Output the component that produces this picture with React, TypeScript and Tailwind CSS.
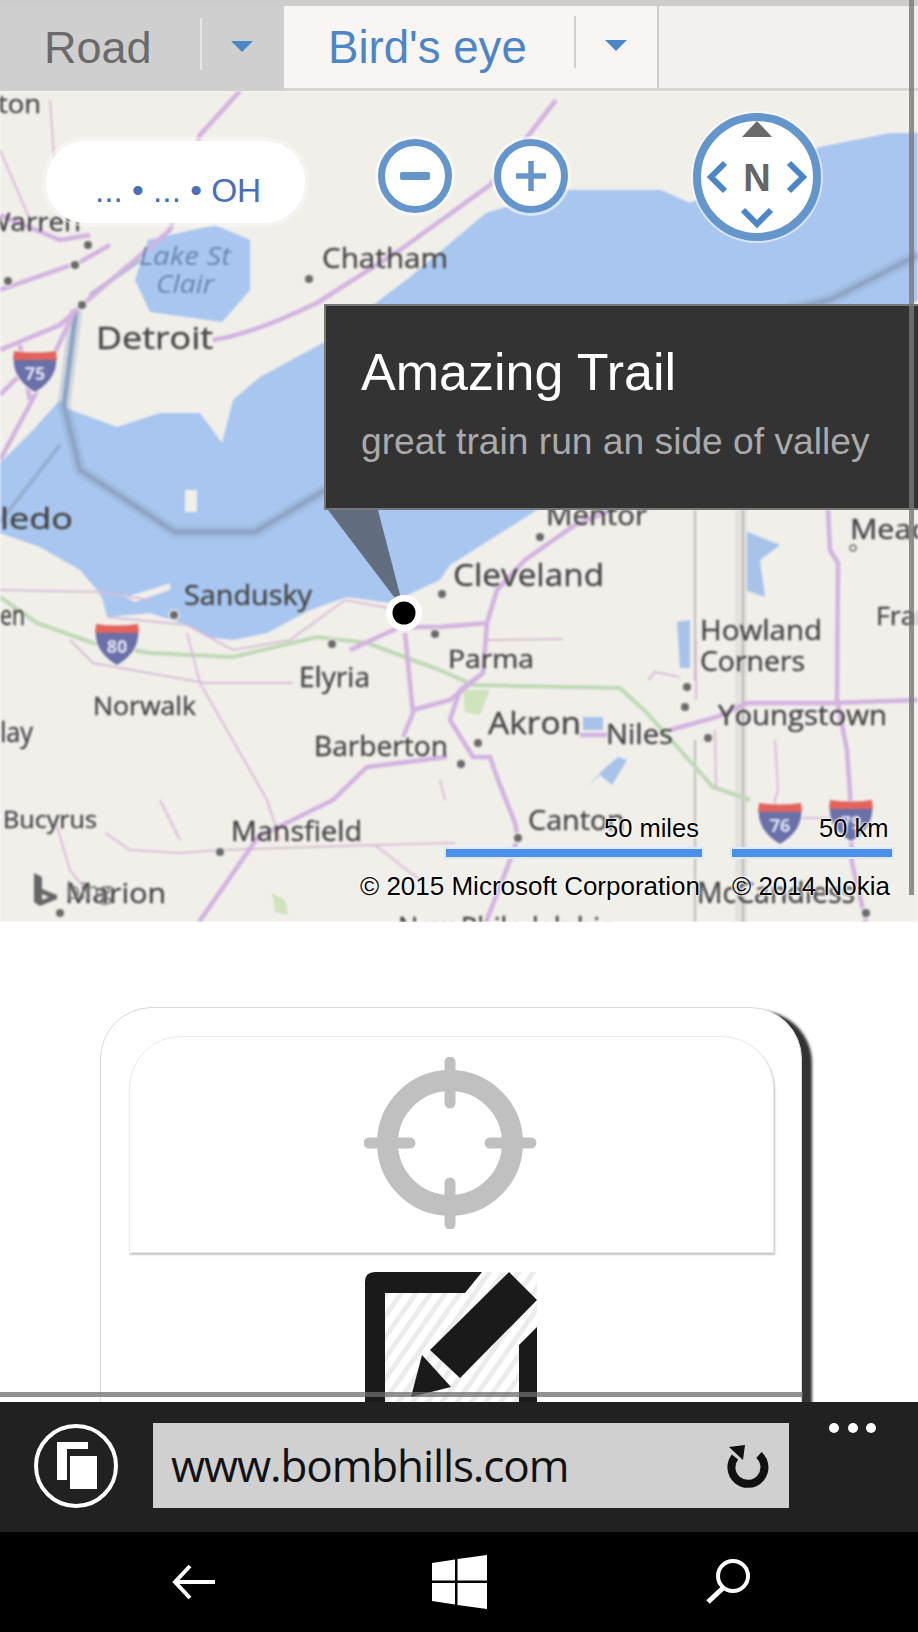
const seg = '"Open Sans","Noto Sans",sans-serif';
const labels: [string, number, number, number, number, string?][] = [
  ['ton', -2, 113, 26, 43],
  ['Warren', -15, 231, 26, 96],
  ['Chatham', 322, 268, 28, 126],
  ['Detroit', 96, 349, 31, 117],
  ['ledo', 0, 529, 30, 73],
  ['Sandusky', 184, 605, 27, 128],
  ['en', 0, 625, 27, 25],
  ['Elyria', 299, 687, 27, 71],
  ['Norwalk', 93, 715, 25, 103],
  ['lay', 0, 742, 27, 33],
  ['Barberton', 314, 756, 27, 134],
  ['Bucyrus', 3, 828, 24, 94],
  ['Mansfield', 231, 841, 28, 131],
  ['Marion', 65, 903, 27, 101],
  ['Mentor', 546, 525, 27, 101],
  ['Cleveland', 453, 586, 31, 151],
  ['Parma', 448, 668, 26, 86],
  ['Akron', 488, 734, 31, 93],
  ['Niles', 606, 744, 28, 67],
  ['Howland', 700, 640, 28, 122],
  ['Corners', 700, 671, 28, 105],
  ['Mead', 850, 539, 27, 80],
  ['Franklin', 876, 625, 26, 100],
  ['Youngstown', 718, 725, 28, 169],
  ['Canton', 528, 830, 28, 97],
  ['McCandless', 697, 903, 29, 158],
  ['New Philadelphia', 398, 937, 28, 217],
];
const dots: [number, number][] = [
  [82, 305], [88, 245], [75, 265], [8, 281], [309, 279], [174, 615], [332, 644], [540, 537], [442, 594],
  [435, 634], [478, 743], [461, 764], [687, 687], [685, 707], [708, 738], [518, 838], [220, 852], [60, 913], [866, 913],
];
const purple = [
  'M240 91 L200 135 L170 230 L82 305',
  'M213 340 Q250 335 317 303 L400 250 L490 185 L556 100',
  'M0 460 L35 395 L75 310',
  'M0 395 L20 375 M20 345 L30 400',
  'M0 215 L60 240 L90 235 M0 290 L80 262 L110 245 M0 350 L60 325 L82 305',
  'M350 650 L400 627 L440 627 L487 623 L497 590 L525 560 L575 525 L625 505',
  'M487 623 L483 673 L460 690 L450 720 L473 757 L490 757 L498 780 L515 823 L518 838 L509 863 L486 922',
  'M405 633 L413 713 L403 737 M413 710 L450 700 L483 673',
  'M447 757 L367 767 L333 800 L258 837 L199 922',
  'M580 735 L607 735 M670 730 L717 717 L747 703 L833 703 L918 700',
  'M828 510 L830 550 L838 563 L837 700 L847 750 L850 793 L852 863 L866 922',
];
const pink = [
  'M0 590 L100 592 L150 600 M107 617 L187 625 L233 650 L290 640 L345 600 L400 610',
  'M187 633 L200 683 L267 800 L280 840 M293 683 L205 683 L93 663 L70 640',
  'M105 833 L130 850 L180 853 L220 850 L375 845 L455 843 M375 845 L420 880',
  'M55 820 L70 870 L90 895 M160 800 L180 840',
  'M648 680 L655 672 L680 677 M696 640 L696 700 M775 740 L778 790 L775 800 L775 818 L850 818',
  'M487 640 L563 639 M0 150 L30 220 M50 100 L55 170',
  'M715 730 L716 790 M440 780 L445 800',
];
const water = 'M918 133 L890 133 L820 147 L690 203 L661 190 L562 190 L486 213 L410 277 L323 343 L260 377 L233 400 L222 443 L200 413 L160 413 L117 427 L63 407 L60 400 L33 430 L0 463 L0 533 L40 547 L80 570 L97 590 L103 600 L107 617 L150 613 L187 625 L207 637 L233 640 L267 633 L310 610 L347 597 L390 603 L440 580 L450 565 L537 510 L918 300 Z';

function MapArt() {
  return (
    <svg viewBox="0 91 918 831" width="918" height="831" className="block blur-[0.8px]">
      <rect x="0" y="91" width="918" height="831" fill="#f1efea" />
      <path d={water} fill="#a8c6ef" />
      <path d="M148 240 L215 225 L250 240 L250 290 L222 322 L150 312 L135 280 Z" fill="#a8c6ef" />
      <path d="M185 490 L197 490 L197 512 L185 512 Z M125 597 Q150 590 170 583 L170 590 L135 602 Z" fill="#f1efea" />
      <path d="M743 530 L780 545 L760 560 L765 597 L745 590 L740 560 Z M677 622 L690 620 L690 668 L680 668 Z M583 717 L603 717 L603 730 L583 730 Z M627 760 L612 785 L600 775 L587 787 L605 768 L618 757 Z" fill="#a8c3ea" />
      <path d="M463 690 L490 690 L480 715 L465 712 Z M272 893 L285 900 L288 915 L275 912 Z" fill="#cfe3bd" />
      <rect x="735" y="510" width="12" height="412" fill="#e4e2de" />
      <path d="M695 510 L695 680 M743 510 L743 922 M695 740 L695 922" stroke="#aaaaaa" strokeWidth="1.5" fill="none" />
      <path d="M76 310 L64 405 L80 470 L175 532 L255 532 L325 490 M560 360 L700 330 L830 300 L918 255" stroke="#8ea5c6" strokeWidth="13" strokeOpacity="0.35" fill="none" />
      <path d="M76 310 L64 405 L80 470 L175 532 L255 532 L325 490 M560 360 L700 330 L830 300 L918 255" stroke="#8ea5c6" strokeWidth="5" fill="none" />
      <path d="M0 522 L60 445 M140 260 L90 295" stroke="#8ea5c6" strokeWidth="4" fill="none" opacity="0.7" />
      <path d="M0 597 L37 623 L93 643 L150 653 L233 657 L317 637 L367 643 L440 670 L473 685 L620 688 L647 713 L680 750 L713 787 L750 800" stroke="#bfd9b5" strokeWidth="4" fill="none" />
      {pink.map((d) => (
        <path key={d} d={d} stroke="#d9bfd8" strokeWidth="2" fill="none" />
      ))}
      {purple.map((d) => (
        <path key={d} d={d} stroke="#d3b3e0" strokeWidth="4.5" fill="none" />
      ))}
      {dots.map(([x, y]) => (
        <g key={x + '-' + y}>
          <circle cx={x} cy={y} r="6" fill="#f1efea" opacity="0.8" />
          <circle cx={x} cy={y} r="4" fill="#6a6a6a" />
        </g>
      ))}
      <circle cx="853" cy="548" r="3" fill="none" stroke="#777" strokeWidth="1.5" />
      {labels.map(([t, x, y, s, w]) => (
        <text key={t} x={x} y={y} fontSize={s} textLength={w} lengthAdjust="spacingAndGlyphs" fontFamily={seg} fill="#444444" stroke="#444444" strokeWidth="0.35">
          {t}
        </text>
      ))}
      <text x="139" y="265" fontSize="25" fontStyle="italic" textLength="92" lengthAdjust="spacingAndGlyphs" fontFamily={seg} fill="#6a85b5">Lake St</text>
      <text x="156" y="293" fontSize="25" fontStyle="italic" textLength="58" lengthAdjust="spacingAndGlyphs" fontFamily={seg} fill="#6a85b5">Clair</text>
      {([[12, 349, '75'], [94, 622, '80'], [757, 801, '76'], [828, 798, '79']] as [number, number, string][]).map(([x, y, n]) => (
        <g key={n} transform={`translate(${x} ${y})`}>
          <path d="M2 2 Q22 5 44 2 Q50 28 23 44 Q-4 28 2 2 Z" fill="#6a70a8" stroke="#f1efea" strokeWidth="1.5" />
          <path d="M2 2 Q22 5 44 2 L45 11 L1 11 Z" fill="#e2635d" />
          <text x="23" y="31" fontSize="18" fontWeight="700" textAnchor="middle" fontFamily={seg} fill="#dfe3f3">{n}</text>
        </g>
      ))}
      <path d="M34 873 L42 877 L42 889 L57 895 L57 899 L40 906 L34 902 Z" fill="#666666" />
      <path d="M42 894 L49 897 L42 900 Z" fill="#f1efea" />
      <text x="66" y="899" fontSize="23" textLength="46" fontFamily={seg} fill="#777777">bing</text>
    </svg>
  );
}

function Caret() {
  return <span className="block w-0 h-0 border-l-[11px] border-r-[11px] border-t-[11px] border-l-transparent border-r-transparent border-t-[#4d86c6]" />;
}

function Round({ children }: { children: React.ReactNode }) {
  return (
    <svg width="84" height="84" viewBox="-42 -42 84 84">
      <circle r="40" fill="#fff" opacity="0.55" />
      <circle r="33.5" fill="#fff" stroke="#6496cc" strokeWidth="7" />
      {children}
    </svg>
  );
}

const halo = '[text-shadow:0_0_2px_#fff,0_0_2px_#fff,0_0_3px_#fff]';

export default function App() {
  return (
    <div className="relative w-[918px] h-[1632px] overflow-hidden flex flex-col bg-white font-['Liberation_Sans',Arial,sans-serif]">
      <div className="h-[6px] bg-[#cdcdcd] shrink-0" />
      {/* tabs */}
      <div className="h-[85px] shrink-0 flex bg-[#f3f1ee] border-b-[3px] border-[#d8d6d2]">
        <div className="w-[284px] -mb-[3px] bg-[#cfcfcf] flex items-center">
          <span className="ml-[44px] w-[156px] text-[45px] leading-none text-[#6a6a6a] pb-[3px]">Road</span>
          <span className="w-[2px] h-[52px] bg-[#e6e6e6] -mt-[10px]" />
          <span className="ml-[29px] -mt-[4px]"><Caret /></span>
        </div>
        <div className="w-[375px] bg-[#f8f5f2] border-r-[2px] border-[#cfcdc9] flex items-center">
          <span className="ml-[44px] w-[246px] text-[45.6px] leading-none text-[#4d86c6] pt-[1px]">Bird's eye</span>
          <span className="w-[2px] h-[52px] bg-[#cfcfcf] -mt-[10px]" />
          <span className="ml-[29px] -mt-[4px]"><Caret /></span>
        </div>
      </div>
      {/* map */}
      <div className="relative h-[831px] shrink-0 overflow-hidden">
        <MapArt />
        <div className="absolute left-[46px] top-[50px] w-[259px] h-[82px] rounded-[40px] bg-white shadow-[0_0_0_4px_rgba(255,255,255,0.35)] pl-[49px] pt-[31px] text-[33.4px] leading-[38px] text-[#4a6fb5] whitespace-nowrap">
          ... • ... • OH
        </div>
        <div className="absolute left-[373px] top-[43px]">
          <Round>
            <rect x="-15" y="-4" width="30" height="8" rx="2" fill="#6496cc" />
          </Round>
        </div>
        <div className="absolute left-[489px] top-[43px]">
          <Round>
            <path d="M-15 0 H15 M0 -15 V15" stroke="#6496cc" strokeWidth="5.5" />
          </Round>
        </div>
        <div className="absolute left-[690px] top-[19px]">
          <svg width="134" height="134" viewBox="-67 -67 134 134">
            <circle r="66" fill="#fff" opacity="0.55" />
            <circle r="60" fill="#fff" stroke="#6496cc" strokeWidth="8" />
            <path d="M-15 -40 L0 -56 L15 -40 Z" fill="#6a6a6a" />
            <path d="M-32 -14 L-46 0 L-32 14 M32 -14 L46 0 L32 14 M-14 33 L0 47 L14 33" stroke="#4d86c6" strokeWidth="6" fill="none" />
            <text x="0" y="14" textAnchor="middle" fontSize="38" fontWeight="700" fontFamily="'Liberation Sans',sans-serif" fill="#666666">N</text>
          </svg>
        </div>
        {/* pointer + pin */}
        <svg className="absolute left-[325px] top-[419px]" width="100" height="125" viewBox="325 510 100 125">
          <path d="M328 510 L378 510 L404 610 Z" fill="#333" opacity="0.6" />
          <circle cx="404" cy="613" r="18" fill="#fff" />
          <circle cx="404" cy="613" r="11.5" fill="#000" />
        </svg>
        {/* infobox */}
        <div className="absolute left-[324px] top-[213px] w-[594px] h-[206px] bg-[#333333] border-2 border-r-0 border-[#777777] pl-[35px] pt-[36px]">
          <div className="text-[52px] leading-[60px] text-white">Amazing Trail</div>
          <div className="mt-[18px] text-[37.2px] leading-[42px] text-[#aaaaaa] whitespace-nowrap">great train run an side of valley</div>
        </div>
        {/* scale */}
        <div className={`absolute left-[604px] top-[722px] text-[25.5px] leading-[30px] text-black whitespace-nowrap ${halo}`}>50 miles</div>
        <div className={`absolute left-[819px] top-[722px] text-[25.5px] leading-[30px] text-black whitespace-nowrap ${halo}`}>50 km</div>
        <div className="absolute left-[444px] top-[756px] w-[260px] h-[12px] bg-[#4a90e8] border-2 border-white/80" />
        <div className="absolute left-[730px] top-[756px] w-[164px] h-[12px] bg-[#4a90e8] border-2 border-white/80" />
        <div className={`absolute left-[360px] top-[780px] text-[26px] leading-[30px] text-black whitespace-nowrap ${halo}`}>© 2015 Microsoft Corporation</div>
        <div className={`absolute left-[732px] top-[780px] text-[26px] leading-[30px] text-black whitespace-nowrap ${halo}`}>© 2014 Nokia</div>
      </div>
      {/* page content */}
      <div className="relative h-[480px] shrink-0 overflow-hidden bg-white pt-[85px] pl-[100px]">
        <div className="w-[702px] h-[500px] rounded-t-[52px] border border-[#d8d8d8] bg-white shadow-[10px_4px_3px_#333333] pt-[28px] pl-[28px]">
          <div className="w-[645px] h-[217px] rounded-t-[52px] border border-[#e9e9e9] shadow-[1px_2px_2px_#c4c4c4] bg-white flex justify-center pt-[20px]">
            <svg width="174" height="172" viewBox="365 1057 174 172" className="-ml-[1px]">
              <circle cx="451" cy="1143" r="62.5" fill="none" stroke="#c0c0c0" strokeWidth="21" />
              <path d="M451 1062 V1103 M451 1183 V1224 M370 1143 H411 M491 1143 H532" stroke="#c0c0c0" strokeWidth="11" strokeLinecap="round" />
            </svg>
          </div>
          <div className="w-[645px] flex justify-center mt-[19px] -ml-[1px]">
            <svg width="172" height="140" viewBox="365 1272 172 140">
              <defs>
                <pattern id="h" width="12" height="12" patternUnits="userSpaceOnUse" patternTransform="rotate(35)">
                  <rect width="5" height="12" fill="#ececec" />
                </pattern>
              </defs>
              <rect x="385" y="1272" width="152" height="140" fill="url(#h)" />
              <path d="M482 1272 H375 Q365 1272 365 1282 V1412 H385 V1293 H465 Z" fill="#1a1a1a" />
              <path d="M537 1327 V1412 H519 V1345 Z" fill="#1a1a1a" />
              <path d="M509 1272 L537 1300 L460 1378 L430 1350 Z" fill="#1a1a1a" />
              <path d="M422 1355 L451 1387 L411 1397 Z" fill="#1a1a1a" />
            </svg>
          </div>
        </div>
        <div className="absolute left-0 top-[470px] w-[803px] h-[5px] bg-[#6e6e6e]/75" />
      </div>
      {/* browser bar */}
      <div className="relative h-[130px] shrink-0 bg-[#212121] flex items-start pl-[34px] pt-[21px]">
        <svg width="84" height="86" viewBox="0 0 84 86">
          <circle cx="42" cy="43" r="40" fill="none" stroke="#fff" strokeWidth="4" />
          <path d="M23 19 H54 V26 H33 V57 H23 Z" fill="#fff" />
          <rect x="36" y="33" width="27" height="33" fill="#fff" />
        </svg>
        <div className="ml-[35px] w-[636px] h-[85px] bg-[#d0d0d0] flex items-center pl-[18px] pr-[18px] justify-between">
          <span className="text-[44px] leading-none tracking-[-1.1px] text-[#111] pb-[2px]" style={{ fontFamily: seg }}>www.bombhills.com</span>
          <svg width="46" height="46" viewBox="0 0 46 46">
            <path d="M11 13 A16.5 16.5 0 1 0 35 13" fill="none" stroke="#111" strokeWidth="8" transform="rotate(-5 23 25)" />
            <path d="M4 4 L20 2 L18 17 Z" fill="#111" />
          </svg>
        </div>
        <div className="absolute left-[829px] top-[21px] flex gap-[8.5px]">
          <span className="w-[10px] h-[10px] rounded-full bg-white" />
          <span className="w-[10px] h-[10px] rounded-full bg-white" />
          <span className="w-[10px] h-[10px] rounded-full bg-white" />
        </div>
      </div>
      {/* phone nav */}
      <div className="h-[100px] shrink-0 bg-black flex items-center">
        <svg className="ml-[172px]" width="44" height="36" viewBox="0 0 44 36">
          <path d="M43 18 H4 M18 2 L3 18 L18 34" fill="none" stroke="#fff" strokeWidth="4" />
        </svg>
        <svg className="ml-[216px]" width="55" height="54" viewBox="0 0 55 54">
          <path d="M0 8 L23 4.5 V25.5 H0 Z M25.5 4 L55 0 V25.5 H25.5 Z M0 28 H23 V49.5 L0 46 Z M25.5 28 H55 V54 L25.5 50 Z" fill="#fff" />
        </svg>
        <svg className="ml-[218px] -mt-[2px]" width="46" height="46" viewBox="0 0 46 46">
          <circle cx="28" cy="18" r="15" fill="none" stroke="#fff" strokeWidth="4" />
          <path d="M18 30 L3 44" stroke="#fff" strokeWidth="5" />
        </svg>
      </div>
      {/* scrollbar overlay */}
      <div className="absolute left-[909px] top-0 w-[5px] h-[895px] bg-[#777777]/80" />
    </div>
  );
}
